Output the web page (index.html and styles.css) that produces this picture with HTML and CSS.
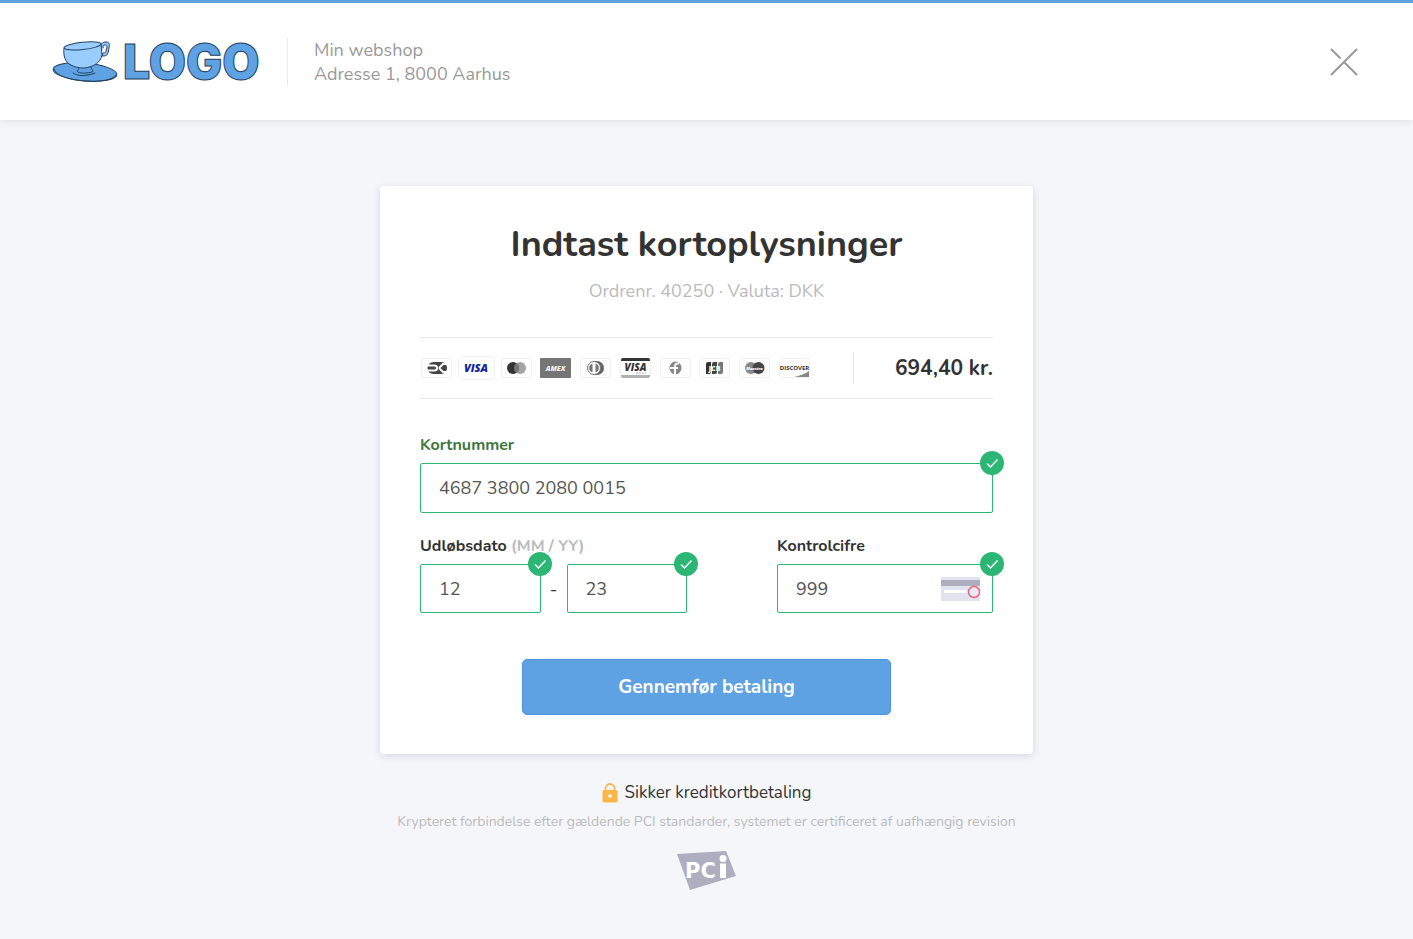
FILE: index.html
```html
<!DOCTYPE html>
<html lang="da">
<head>
    <meta charset="UTF-8">
    <meta name="viewport" content="width=device-width, initial-scale=1.0">
    <title>Indtast kortoplysninger</title>
    <link rel="stylesheet" href="styles.css">
</head>
<body>
    <header class="header">
        <svg class="logo" viewBox="0 -2 208 44" width="208" height="44" role="img" aria-label="Logo">
            <g stroke="#24425f" stroke-width="1" stroke-linecap="round" stroke-linejoin="round">
                <ellipse cx="32" cy="30" rx="32" ry="9" transform="rotate(5 32 30)" fill="#5fa2e4"/>
                <path d="M1 27c2 7 16 11 32 12 15 1 27-1 30-6" fill="none"/>
                <path d="M20 31c4 3 12 4 22 0M26 26c0 2-3 3-1 4 4 2 10 1 14 0 2-1-1-3-1-5" fill="#5fa2e4"/>
                <path d="M48 5c0-4 2-5 5-5s4 2 3 6l-1 5c-1 3-3 3-6 3l1-3c2 0 3 0 3-2l1-4c0-2-1-2-2-2-2 0-2 1-2 3" fill="#99ccff"/>
                <path d="M11 6c-1 8 1 14 7 17 3 2 8 3 13 3 10-1 17-6 18-13l-1-11" fill="#99ccff"/>
                <ellipse cx="29.500" cy="4" rx="18.500" ry="3.600" transform="rotate(-6 29 4)" fill="#99ccff"/>
            </g>
            <text class="logo-text" x="70" y="37">LOGO</text>
        </svg>
        <div class="shop">
            <div>Min webshop</div>
            <div>Adresse 1, 8000 Aarhus</div>
        </div>
        <button class="close" type="button" aria-label="Luk">
            <svg viewBox="0 0 28 28" width="28" height="28" fill="none" stroke="#999" stroke-width="2">
                <path d="M1 27L27 1M1 1l9.500 9.500M14 14l13 13"/>
            </svg>
        </button>
    </header>

    <main class="main">
        <form class="card">
            <h1>Indtast kortoplysninger</h1>
            <p class="order">Ordrenr. 40250 · Valuta: DKK</p>

            <div class="summary">
                <div class="methods">
                    <!-- Dankort -->
                    <svg viewBox="0 0 31 20" width="31" height="20">
                        <rect class="frame" x=".5" y=".5" width="30" height="19" rx="2"/>
                        <rect x="6.500" y="4" width="19.500" height="12" rx="6" fill="#444"/>
                        <path d="M7 7.500h6.500a2.500 2.500 0 0 1 0 5H7M18 10l4-4h3M18 10l4 4h3" fill="none" stroke="#fff" stroke-width="2"/>
                        <path d="M7 10h6" stroke="#444" stroke-width="2"/>
                    </svg>
                    <!-- Visa -->
                    <svg class="active" viewBox="0 0 37 24" width="37" height="24">
                        <rect class="frame" x=".5" y=".5" width="36" height="23" rx="3"/>
                        <text class="brand visa" x="18" y="16" text-anchor="middle">VISA</text>
                    </svg>
                    <!-- Mastercard -->
                    <svg viewBox="0 0 31 20" width="31" height="20">
                        <rect class="frame" x=".5" y=".5" width="30" height="19" rx="2"/>
                        <circle cx="19" cy="10" r="6" fill="#a3a3a3"/>
                        <circle cx="12" cy="10" r="6" fill="#333"/>
                        <path d="M15.500 5.100a6 6 0 0 1 0 9.800a6 6 0 0 1 0-9.800z" fill="#777"/>
                    </svg>
                    <!-- American Express -->
                    <svg viewBox="0 0 31 20" width="31" height="20">
                        <rect width="31" height="20" rx="1" fill="#757575"/>
                        <text class="brand amex" x="15.500" y="13" text-anchor="middle">AMEX</text>
                    </svg>
                    <!-- Diners Club -->
                    <svg viewBox="0 0 31 20" width="31" height="20">
                        <rect class="frame" x=".5" y=".5" width="30" height="19" rx="2"/>
                        <path d="M13 3h4a7 7 0 0 1 0 14h-4z" fill="#666"/>
                        <circle cx="14" cy="10" r="6.500" fill="#fff" stroke="#777"/>
                        <path d="M12.500 5.500a4.700 4.700 0 0 0 0 9zM15.500 5.500a4.700 4.700 0 0 1 0 9z" fill="#777"/>
                    </svg>
                    <!-- Visa Electron -->
                    <svg viewBox="0 0 31 20" width="31" height="20">
                        <rect class="frame" x=".5" y=".5" width="30" height="19" rx="2"/>
                        <path d="M1 3V2q0-2 2-2h25q2 0 2 2v1z" fill="#333"/>
                        <path d="M1 17h29v1q0 2-2 2H3q-2 0-2-2z" fill="#b0b0b0"/>
                        <text class="brand electron" x="15.500" y="13" text-anchor="middle">VISA</text>
                        <path d="M16 15h10" stroke="#aaa" stroke-dasharray="2 1"/>
                    </svg>
                    <!-- Forbrugsforeningen -->
                    <svg viewBox="0 0 31 20" width="31" height="20">
                        <rect class="frame" x=".5" y=".5" width="30" height="19" rx="2"/>
                        <ellipse cx="15.500" cy="10" rx="6" ry="6.500" fill="#888"/>
                        <path d="M19 5.500c-3-.5-4 1-4 3V17M10 10h8" fill="none" stroke="#fff" stroke-width="2"/>
                    </svg>
                    <!-- JCB -->
                    <svg viewBox="0 0 31 20" width="31" height="20">
                        <rect class="frame" x=".5" y=".5" width="30" height="19" rx="2"/>
                        <path d="M9 4h3v10q0 2-2 2H7V6q0-2 2-2z" fill="#333"/>
                        <path d="M15 4h3v10q0 2-2 2h-3V6q0-2 2-2z" fill="#444"/>
                        <path d="M21 4h3v10q0 2-2 2h-3V6q0-2 2-2z" fill="#777"/>
                        <text class="brand jcb" x="15.500" y="12.500" text-anchor="middle">JCB</text>
                    </svg>
                    <!-- Maestro -->
                    <svg viewBox="0 0 31 20" width="31" height="20">
                        <rect class="frame" x=".5" y=".5" width="30" height="19" rx="2"/>
                        <circle cx="12" cy="10" r="6" fill="#888"/>
                        <circle cx="19.500" cy="10" r="6" fill="#444"/>
                        <text class="brand maestro" x="15.500" y="11.500" text-anchor="middle">Maestro</text>
                    </svg>
                    <!-- Discover -->
                    <svg viewBox="0 0 31 20" width="31" height="20">
                        <rect class="frame" x=".5" y=".5" width="30" height="19" rx="2"/>
                        <path d="M15 19q9-2 15-6v6z" fill="#888"/>
                        <text class="brand discover" x="15.500" y="12" text-anchor="middle">DISCOVER</text>
                    </svg>
                </div>
                <div class="amount">694,40 kr.</div>
            </div>

            <div class="field">
                <label class="valid" for="cardnumber">Kortnummer</label>
                <div class="control">
                    <input id="cardnumber" type="text" inputmode="numeric" value="4687 3800 2080 0015">
                    <svg class="check" viewBox="0 0 24 24" width="24" height="24"><circle cx="12" cy="12" r="12"/><path d="M7 12.500l3.500 3.500 7-7.500"/></svg>
                </div>
            </div>

            <div class="row">
                <div class="field expiry">
                    <label for="month">Udløbsdato <span class="hint">(MM / YY)</span></label>
                    <div class="dates">
                        <div class="control">
                            <input id="month" type="text" inputmode="numeric" value="12">
                            <svg class="check" viewBox="0 0 24 24" width="24" height="24"><circle cx="12" cy="12" r="12"/><path d="M7 12.500l3.500 3.500 7-7.500"/></svg>
                        </div>
                        <span class="dash">-</span>
                        <div class="control">
                            <input id="year" type="text" inputmode="numeric" value="23" aria-label="År">
                            <svg class="check" viewBox="0 0 24 24" width="24" height="24"><circle cx="12" cy="12" r="12"/><path d="M7 12.500l3.500 3.500 7-7.500"/></svg>
                        </div>
                    </div>
                </div>
                <div class="field cvc">
                    <label for="cvc">Kontrolcifre</label>
                    <div class="control">
                        <input id="cvc" type="text" inputmode="numeric" value="999">
                        <svg class="cvc-card" viewBox="0 0 40 24" width="40" height="24">
                            <path fill="#e0e4ee" d="M0 0h39v24H0z"/>
                            <path fill="#adafc0" d="M0 3h39v6H0z"/>
                            <path fill="#fff" d="M3 13h23v3H3z"/>
                            <circle cx="33" cy="15" r="5.500" fill="#e9eaf2" stroke="#f5627f" stroke-width="1.500"/>
                        </svg>
                        <svg class="check" viewBox="0 0 24 24" width="24" height="24"><circle cx="12" cy="12" r="12"/><path d="M7 12.500l3.500 3.500 7-7.500"/></svg>
                    </div>
                </div>
            </div>

            <button class="pay" type="submit">Gennemfør betaling</button>
        </form>

        <footer class="footer">
            <div class="secure">
                <svg viewBox="0 0 16 20" width="16" height="20">
                    <path d="M3.500 8V5.500a4.500 4.500 0 0 1 9 0V8" fill="none" stroke="#ffb648" stroke-width="1.800"/>
                    <rect x=".5" y="7" width="15" height="12.500" rx="1.500" fill="#ffb648"/>
                    <circle cx="8" cy="13" r="1.800" fill="#fff"/>
                </svg>
                Sikker kreditkortbetaling
            </div>
            <p class="note">Krypteret forbindelse efter gældende PCI standarder, systemet er certificeret af uafhængig revision</p>
            <svg class="pci" viewBox="0 0 60 40" width="60" height="40" role="img" aria-label="PCI">
                <path d="M0 3l49-3 10 25-46 14z" fill="#adafc0"/>
                <text class="pci-text" x="8" y="27">PC</text>
                <path d="M43 12.500h6v14.500h-6z" fill="#fff"/>
                <circle cx="46" cy="7.500" r="3.500" fill="#fff"/>
            </svg>
        </footer>
    </main>
</body>
</html>
```
FILE: styles.css
```css
* {
    box-sizing: border-box;
}

body {
    margin: 0;
    min-height: 100vh;
    background: #f5f6fa;
    color: #333;
    font-family: Nunito, Lato, sans-serif;
    font-size: 18px;
}

.header {
    display: flex;
    align-items: center;
    padding: 35px 55px 34px 53px;
    border-top: 3px solid #5fa2e4;
    background: #fff;
    box-shadow: 0 1px 8px rgba(50, 60, 80, .12);
}

.logo {
    overflow: visible;
}

.logo-text {
    font-family: Inter, sans-serif;
    font-size: 48px;
    font-weight: 900;
    fill: #5fa2e4;
    stroke: #24425f;
    stroke-width: 1px;
}

.shop {
    margin-left: 26px;
    padding-left: 26px;
    border-left: 1px solid #e8e9ed;
    color: #999;
    line-height: 24px;
}

.close {
    display: flex;
    margin-left: auto;
    padding: 0;
    border: 0;
    background: none;
    cursor: pointer;
}

.main {
    max-width: 653px;
    margin: 66px auto 0;
}

.card {
    padding: 34px 40px 39px;
    border-radius: 4px;
    background: #fff;
    box-shadow: 0 2px 8px rgba(50, 60, 80, .16);
}

h1 {
    margin: 0;
    font-size: 36px;
    font-weight: 700;
    line-height: 50px;
    text-align: center;
}

.order {
    margin: 8px 0 33px;
    color: #bbb;
    line-height: 26px;
    text-align: center;
}

.summary {
    display: flex;
    align-items: center;
    padding: 14px 0;
    border: solid #e8e9ed;
    border-width: 1px 0;
}

.methods {
    display: flex;
    flex: 1;
    align-items: center;
    justify-content: space-between;
    height: 32px;
    padding: 0 43px 0 1px;
    border-right: 1px solid #e8e9ed;
}

.active {
    margin: 0 -3px;
}

.frame {
    fill: #fff;
    stroke: #f0f0f0;
}

.brand {
    font-family: "Open Sans", sans-serif;
    font-weight: 800;
    font-style: italic;
}

.visa {
    font-size: 11px;
    fill: #10239e;
}

.amex {
    font-size: 7px;
    fill: #eee;
}

.electron {
    font-size: 10px;
    fill: #333;
}

.jcb {
    font-size: 7px;
    font-style: normal;
    fill: #fff;
}

.maestro {
    font-size: 4px;
    fill: #fff;
}

.discover {
    font-size: 6px;
    font-weight: 700;
    font-style: normal;
    fill: #333;
}

.amount {
    width: 139px;
    font-size: 21px;
    font-weight: 700;
    text-align: right;
}

.field label {
    display: block;
    margin-bottom: 8px;
    font-size: 16px;
    font-weight: 700;
    line-height: 20px;
}

.field .valid {
    color: #3c763d;
}

.summary + .field {
    margin-top: 36px;
}

.hint {
    color: #bbb;
}

.control {
    position: relative;
    flex: 1;
}

.control input {
    display: block;
    width: 100%;
    height: 50px;
    padding: 0 18px;
    border: 1px solid #2bb673;
    border-radius: 2px;
    outline: none;
    background: #fff;
    color: #555;
    font: inherit;
}

.check {
    position: absolute;
    top: -12px;
    right: -11px;
    fill: #2bb673;
}

.check path {
    fill: none;
    stroke: #fff;
    stroke-width: 1.5px;
}

.cvc-card {
    position: absolute;
    top: 13px;
    right: 12px;
}

.row {
    display: flex;
    justify-content: space-between;
    margin-top: 23px;
}

.row input {
    height: 49px;
}

.expiry {
    width: 267px;
}

.cvc {
    width: 216px;
}

.dates {
    display: flex;
    align-items: center;
}

.dash {
    width: 26px;
    text-align: center;
}

.pay {
    display: block;
    width: 369px;
    max-width: 100%;
    height: 56px;
    margin: 46px auto 0;
    border: 1px solid #4a95e0;
    border-radius: 5px;
    background: #5fa2e4;
    color: #fff;
    font: inherit;
    font-size: 19px;
    font-weight: 700;
    cursor: pointer;
}

.footer {
    margin-top: 27px;
    text-align: center;
}

.secure {
    display: flex;
    align-items: center;
    justify-content: center;
    gap: 7px;
    font-size: 17px;
    line-height: 24px;
}

.note {
    margin: 7px 0 19px;
    color: #bbb;
    font-size: 14px;
    line-height: 20px;
}

.pci {
    display: block;
    margin: 0 auto;
}

.pci-text {
    font-family: "DejaVu Sans", sans-serif;
    font-size: 21px;
    font-weight: 700;
    fill: #fff;
}
```
